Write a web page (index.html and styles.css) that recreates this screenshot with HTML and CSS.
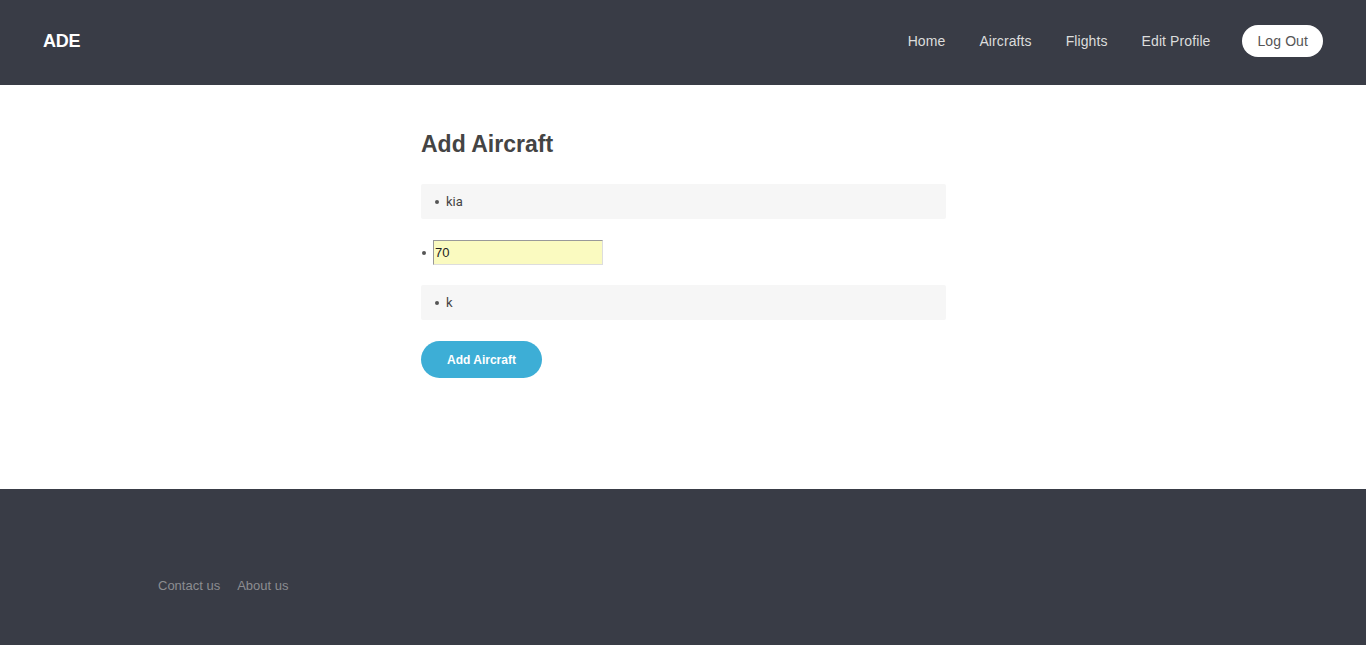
FILE: index.html
```html
<!DOCTYPE html>
<html>
<head>
<meta charset="utf-8">
<title>ADE - Add Aircraft</title>
<link rel="stylesheet" href="styles.css">
</head>
<body>
<header class="topbar">
  <a class="logo" href="#">ADE</a>
  <nav class="nav">
    <a href="#">Home</a>
    <a href="#">Aircrafts</a>
    <a href="#">Flights</a>
    <a href="#">Edit Profile</a>
    <a class="logout" href="#">Log Out</a>
  </nav>
</header>
<main class="main">
  <div class="content">
    <h1>Add Aircraft</h1>
    <form class="form">
      <ul class="field boxed"><li>kia</li></ul>
      <ul class="field plain"><li><input class="num" type="text" value="70"></li></ul>
      <ul class="field boxed"><li>k</li></ul>
      <button class="submit" type="button">Add Aircraft</button>
    </form>
  </div>
</main>
<footer class="footer">
  <a href="#">Contact us</a>
  <a href="#">About us</a>
</footer>
</body>
</html>
```
FILE: styles.css
```css
* { box-sizing: border-box; }
html, body { margin: 0; padding: 0; }
body { font-family: "Liberation Sans", Arial, sans-serif; background: #fff; }
a { text-decoration: none; }

.topbar {
  height: 85px;
  background: #393c46;
  display: flex;
  align-items: center;
  justify-content: space-between;
  padding: 0 43px 3px;
}
.logo {
  color: #fff;
  font-weight: bold;
  font-size: 18px;
  letter-spacing: -0.3px;
}
.nav { display: flex; align-items: center; }
.nav a {
  color: #dcdcdc;
  font-size: 14px;
  margin-left: 34px;
  letter-spacing: 0.1px;
}
.nav a.logout {
  background: #fff;
  color: #555;
  border-radius: 16px;
  height: 32px;
  line-height: 32px;
  padding: 0 15px;
  margin-left: 32px;
}

.main { height: 404px; display: flex; justify-content: center; }
.content { width: 525px; padding-top: 45px; margin-left: 1px; }
h1 {
  margin: 0 0 26px;
  font-size: 23px;
  color: #444;
  font-weight: bold;
  line-height: 28px;
}
.form { display: flex; flex-direction: column; }
.field {
  margin: 0 0 21px;
  list-style: none;
  font-family: Roboto, "Liberation Sans", sans-serif;
  font-size: 13px;
  color: #444;
}
.field li { display: flex; align-items: center; }
.field li::before {
  content: "";
  width: 4px;
  height: 4px;
  border-radius: 50%;
  background: #555;
  margin-right: 7px;
}
.boxed {
  background: #f6f6f6;
  border-radius: 2px;
  height: 35px;
  padding: 0 0 0 14px;
  display: flex;
  align-items: center;
}
.plain { padding: 0; height: 25px; margin-bottom: 20px; }
.plain li::before { margin-left: 1px; margin-right: 7px; }
.num {
  width: 170px;
  height: 25px;
  background: #fafac0;
  border: 1px solid #ddd;
  border-top-color: #999;
  border-left-color: #999;
  padding: 0 1px;
  font-family: "Liberation Sans", Arial, sans-serif;
  font-size: 13px;
  color: #222;
}
.submit {
  align-self: flex-start;
  width: 121px;
  height: 37px;
  border: 0;
  border-radius: 19px;
  background: #3daed6;
  color: #fff;
  font-family: "Liberation Sans", Arial, sans-serif;
  font-weight: bold;
  font-size: 12px;
}

.footer {
  height: 156px;
  background: #393c46;
  padding: 89px 0 0 158px;
  display: flex;
}
.footer a {
  color: #8c8d91;
  font-size: 13px;
  margin-right: 17px;
  line-height: 15px;
}
```
